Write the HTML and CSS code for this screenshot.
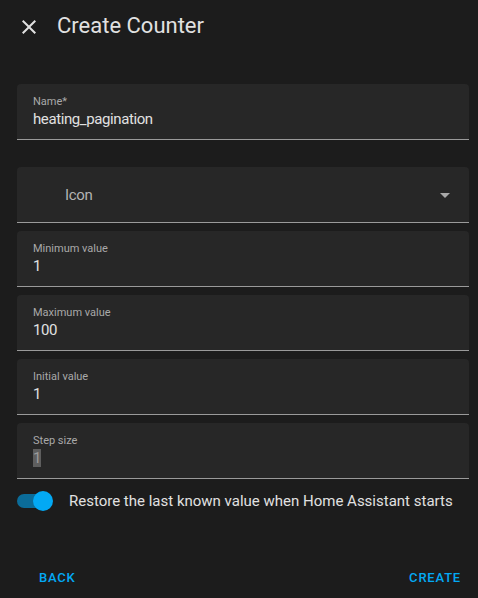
FILE: index.html
```html
<!DOCTYPE html>
<html>
<head>
<meta charset="utf-8">
<link rel="stylesheet" href="styles.css">
</head>
<body>
<div class="dialog">
  <header class="header">
    <svg class="close" width="24" height="24" viewBox="0 0 24 24"><path fill="#e1e1e1" d="M19 6.41L17.59 5 12 10.59 6.41 5 5 6.41 10.59 12 5 17.59 6.41 19 12 13.41 17.59 19 19 17.59 13.41 12z"/></svg>
    <h1 class="title">Create Counter</h1>
  </header>
  <div class="content">
    <div class="field">
      <div class="label">Name*</div>
      <div class="value">heating_pagination</div>
    </div>
    <div class="field select">
      <span class="placeholder">Icon</span>
      <span class="arrow"></span>
    </div>
    <div class="field">
      <div class="label">Minimum value</div>
      <div class="value">1</div>
    </div>
    <div class="field">
      <div class="label">Maximum value</div>
      <div class="value">100</div>
    </div>
    <div class="field">
      <div class="label">Initial value</div>
      <div class="value">1</div>
    </div>
    <div class="field">
      <div class="label">Step size</div>
      <div class="value"><span class="sel">1</span></div>
    </div>
    <div class="toggle-row">
      <div class="switch"><div class="track"></div><div class="knob"></div></div>
      <span class="toggle-label">Restore the last known value when Home Assistant starts</span>
    </div>
  </div>
  <footer class="actions">
    <span class="btn">Back</span>
    <span class="btn">Create</span>
  </footer>
</div>
</body>
</html>
```
FILE: styles.css
```css
html, body {
  margin: 0;
  padding: 0;
  background: #1c1c1c;
  font-family: Roboto, "Liberation Sans", sans-serif;
  color: #e1e1e1;
}
.dialog {
  width: 478px;
  height: 598px;
  display: flex;
  flex-direction: column;
}
.header {
  display: flex;
  align-items: center;
  height: 52px;
  padding-left: 17px;
}
.close {
  display: block;
  margin-top: 1px;
}
.title {
  margin: 0 0 0 16px;
  font-size: 22px;
  font-weight: 400;
  line-height: 28px;
  color: #e1e1e1;
}
.content {
  padding: 32px 9px 0 17px;
  display: flex;
  flex-direction: column;
  gap: 8px;
}
.field {
  background: #272727;
  border-bottom: 1px solid #9a9a9a;
  border-radius: 4px 4px 0 0;
  padding: 11px 16px 0 16px;
  box-sizing: content-box;
  height: 44px;
}
.field:first-child {
  margin-bottom: 19px;
}
.label {
  font-size: 11px;
  line-height: 14px;
  color: #a9a9a9;
}
.value {
  font-size: 15px;
  letter-spacing: -0.4px;
  line-height: 20px;
  color: #e1e1e1;
}
.sel {
  background: #5e5e5e;
  color: #9a9a9a;
}
.field.select {
  padding: 0 19px 0 48px;
  height: 55px;
  display: flex;
  align-items: center;
  justify-content: space-between;
}
.placeholder {
  font-size: 15px;
  letter-spacing: -0.3px;
  color: #b3b3b3;
}
.arrow {
  width: 0;
  height: 0;
  border-left: 5px solid transparent;
  border-right: 5px solid transparent;
  border-top: 5px solid #a9a9a9;
  margin-top: 2px;
}
.toggle-row {
  display: flex;
  align-items: center;
  height: 28px;
}
.switch {
  position: relative;
  width: 36px;
  height: 20px;
  margin-right: 16px;
}
.track {
  position: absolute;
  left: 0;
  top: 3px;
  width: 34px;
  height: 14px;
  border-radius: 7px;
  background: #0b6c99;
}
.knob {
  position: absolute;
  left: 16px;
  top: 0;
  width: 20px;
  height: 20px;
  border-radius: 50%;
  background: #03a9f4;
}
.toggle-label {
  font-size: 15px;
  line-height: 20px;
  color: #e1e1e1;
}
.actions {
  margin-top: auto;
  padding: 0 17px 12px 39px;
  display: flex;
  justify-content: space-between;
}
.btn {
  font-size: 13px;
  font-weight: 500;
  letter-spacing: 0.8px;
  text-transform: uppercase;
  color: #03a9f4;
  line-height: 16px;
}
```
